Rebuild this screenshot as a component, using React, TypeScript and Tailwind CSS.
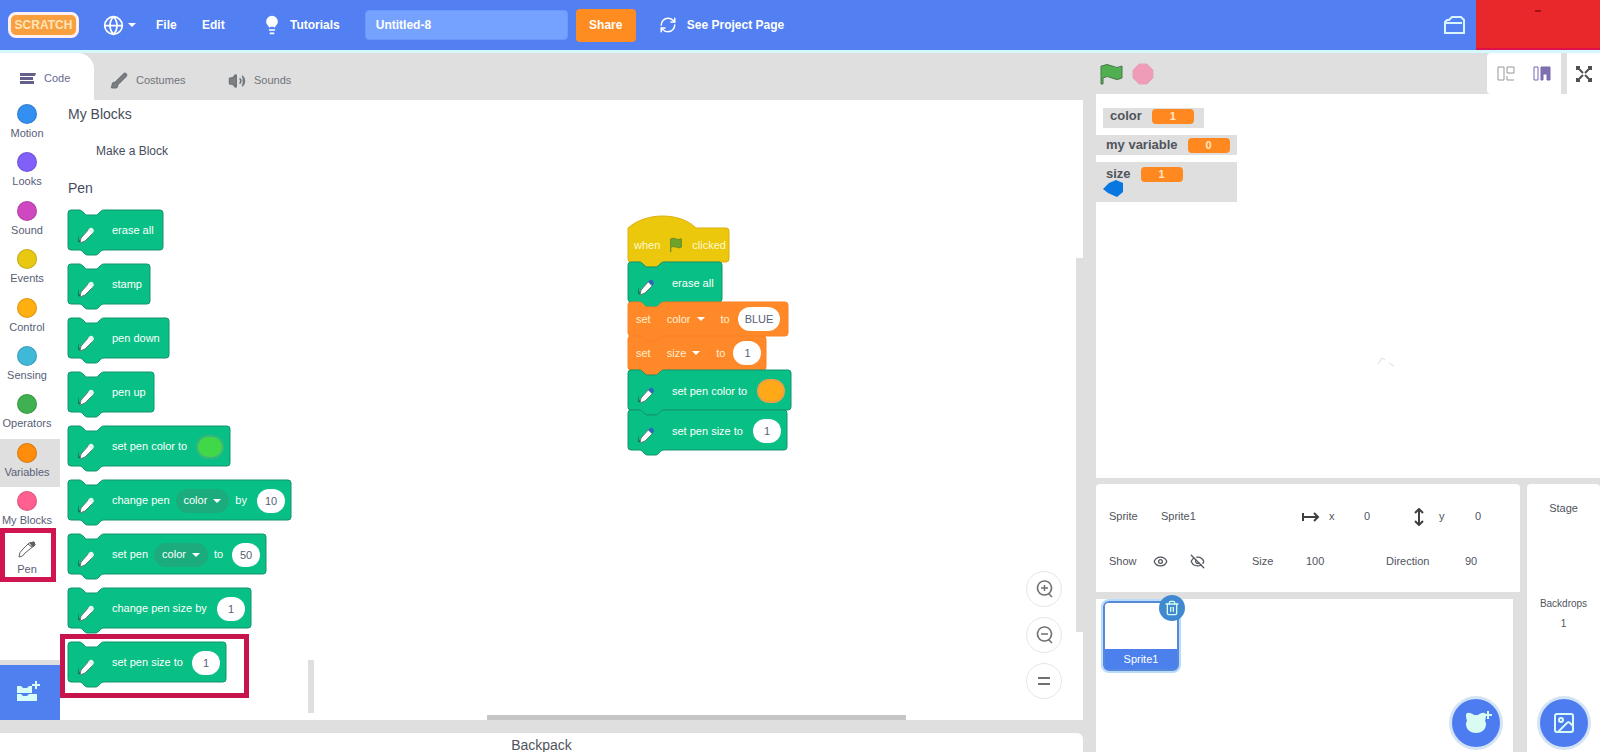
import React from "react";
import {
  Brush,
  Cat,
  Eye,
  EyeOff,
  Flag,
  Globe,
  Image as ImageIcon,
  Lightbulb,
  RefreshCw,
  Trash2,
  Volume2,
} from "lucide-react";

interface Category {
  name: string;
  color: string;
}

interface BlockPart {
  kind: "text" | "menu" | "value" | "color" | "variable";
  text?: string;
  className?: string;
}

interface BlockData {
  id: string;
  width: number;
  parts: BlockPart[];
}

interface Monitor {
  name: string;
  value: string;
  box: string;
}

const categories: Category[] = [
  { name: "Motion", color: "bg-[#3390f0]" },
  { name: "Looks", color: "bg-[#8060f8]" },
  { name: "Sound", color: "bg-[#d048c0]" },
  { name: "Events", color: "bg-[#e8c810]" },
  { name: "Control", color: "bg-[#ffb010]" },
  { name: "Sensing", color: "bg-[#40b8d8]" },
  { name: "Operators", color: "bg-[#40b050]" },
  { name: "Variables", color: "bg-[#ff8c0a]" },
  { name: "My Blocks", color: "bg-[#ff6090]" },
];

const penBlocks: BlockData[] = [
  { id: "erase", width: 95, parts: [{ kind: "text", text: "erase all" }] },
  { id: "stamp", width: 82, parts: [{ kind: "text", text: "stamp" }] },
  { id: "down", width: 101, parts: [{ kind: "text", text: "pen down" }] },
  { id: "up", width: 86, parts: [{ kind: "text", text: "pen up" }] },
  {
    id: "set-color",
    width: 162,
    parts: [
      { kind: "text", text: "set pen color to" },
      { kind: "color", className: "bg-[#40d848] border-[#38b878]" },
    ],
  },
  {
    id: "change-param",
    width: 223,
    parts: [
      { kind: "text", text: "change pen" },
      { kind: "menu", text: "color" },
      { kind: "text", text: "by" },
      { kind: "value", text: "10" },
    ],
  },
  {
    id: "set-param",
    width: 198,
    parts: [
      { kind: "text", text: "set pen" },
      { kind: "menu", text: "color" },
      { kind: "text", text: "to" },
      { kind: "value", text: "50" },
    ],
  },
  {
    id: "change-size",
    width: 183,
    parts: [
      { kind: "text", text: "change pen size by" },
      { kind: "value", text: "1" },
    ],
  },
  {
    id: "set-size",
    width: 158,
    parts: [
      { kind: "text", text: "set pen size to" },
      { kind: "value", text: "1" },
    ],
  },
];

const monitors: Monitor[] = [
  { name: "color", value: "1", box: "ml-[7px] h-5 w-[101px] pl-[7px] pb-1" },
  { name: "my variable", value: "0", box: "mt-[7px] h-5 w-[141px] pl-2.5" },
  { name: "size", value: "1", box: "mt-[7px] h-10 w-[141px] pl-2.5 pb-4" },
];

const notchTop = "H11 c2 0 3 1 4 2 l2 2 c1 1 2 1 3 1 h7 c1 0 2 0 3 -1 l2 -2 c1 -1 2 -2 4 -2";
const notchBottom = "H36 c-2 0 -3 1 -4 2 l-2 2 c-1 1 -2 1 -3 1 h-7 c-1 0 -2 0 -3 -1 l-2 -2 c-1 -1 -2 -2 -4 -2";

interface ShapeProps {
  width: number;
  height: number;
  fill: string;
  stroke: string;
  hat?: boolean;
}

const BlockShape: React.FC<ShapeProps> = ({ width, height, fill, stroke, hat }) => {
  const top = hat ? `M0 12 C18 -4 52 -4 68 12 H${width - 3}` : `M0 3 Q0 0 3 0 ${notchTop} H${width - 3}`;
  const shoulder = hat ? 12 : 0;
  return (
    <svg className="absolute inset-0 overflow-visible" width={width} height={height} aria-hidden="true">
      <path
        d={`${top} q3 0 3 3 V${height - 3} q0 3 -3 3 ${notchBottom} H3 q-3 0 -3 -3 V${shoulder + 3} Z`}
        fill={fill}
        stroke={stroke}
      />
    </svg>
  );
};

const PenIcon = ({ tip }: { tip: string }) => (
  <svg className="h-5 w-4" viewBox="0 0 16 20" aria-hidden="true">
    <path d="M2 18 L3 13 L11 4 L15 8 L7 16 Z" fill="white" stroke="#5f7c74" strokeWidth="1" />
    <path d="M10 5 L12 3 Q15 2 16 6 L14 9 Z" fill={tip} />
    <path d="M0 11 Q-1 15 2 17" fill="none" stroke="#126b52" strokeWidth="1.5" />
  </svg>
);

const Part: React.FC<{ part: BlockPart; label: string }> = ({ part, label }) => {
  if (part.kind === "menu" || part.kind === "variable") {
    return (
      <button
        className={`flex h-6 items-center gap-1.5 rounded-full px-2 ${part.kind === "menu" ? "bg-[#1cab7c]" : ""}`}
      >
        {part.text}
        <svg className="h-1.5 w-2" viewBox="0 0 8 6" aria-hidden="true">
          <path d="M0 1 H8 L4 5 Z" fill="white" />
        </svg>
      </button>
    );
  }
  if (part.kind === "value") {
    return (
      <input
        aria-label={label}
        defaultValue={part.text}
        className={`ml-auto h-6 rounded-full bg-white text-center font-normal text-[#575e75] ${part.className || "w-7"}`}
      />
    );
  }
  if (part.kind === "color") {
    return <button aria-label={label} className={`ml-auto h-6 w-7 rounded-full border-2 ${part.className}`} />;
  }
  return <span>{part.text}</span>;
};

const PenBlock: React.FC<{ block: BlockData; tip?: string }> = ({ block, tip = "#e8f4f0" }) => (
  <div className="relative h-10" style={{ width: block.width }}>
    <BlockShape width={block.width} height={40} fill="#08c085" stroke="#10946c" />
    <div className="relative flex h-full items-center gap-1.5 pt-0.5 pr-1.5 pl-2.5 text-[11px] whitespace-nowrap text-white">
      <span className="mr-3 w-4 shrink-0 pt-2">
        <PenIcon tip={tip} />
      </span>
      {block.parts.map((part, index) => (
        <Part key={index} part={part} label={block.id} />
      ))}
    </div>
  </div>
);

const VariableBlock: React.FC<{ block: BlockData }> = ({ block }) => (
  <div className="relative h-[34px]" style={{ width: block.width }}>
    <BlockShape width={block.width} height={34} fill="#ff8828" stroke="#fa8226" />
    <div className="relative flex h-full items-center gap-2 pr-2 pl-2 text-[11px] whitespace-nowrap text-[#fff0d0]">
      {block.parts.map((part, index) => (
        <Part key={index} part={part} label={block.id} />
      ))}
    </div>
  </div>
);

const Script = () => (
  <div className="absolute top-[116px] left-[314px] flex flex-col">
    <div className="relative h-[46px] w-[101px]">
      <BlockShape width={101} height={46} fill="#ecc80c" stroke="#dcb010" hat />
      <div className="relative flex h-full items-center gap-2 pt-3 pl-1.5 text-[11px] text-[#fff8d0]">
        <span>when</span>
        <Flag className="size-4 fill-[#6fa32a] text-[#6f942a]" />
        <span>clicked</span>
      </div>
    </div>
    <PenBlock tip="#2c68b8" block={{ id: "script erase", width: 94, parts: [{ kind: "text", text: "erase all" }] }} />
    <VariableBlock
      block={{
        id: "color value",
        width: 160,
        parts: [
          { kind: "text", text: "set" },
          { kind: "variable", text: "color" },
          { kind: "text", text: "to" },
          { kind: "value", text: "BLUE", className: "w-[42px]" },
        ],
      }}
    />
    <VariableBlock
      block={{
        id: "size value",
        width: 138,
        parts: [
          { kind: "text", text: "set" },
          { kind: "variable", text: "size" },
          { kind: "text", text: "to" },
          { kind: "value", text: "1" },
        ],
      }}
    />
    <PenBlock
      tip="#2c68b8"
      block={{
        id: "script pen color",
        width: 163,
        parts: [
          { kind: "text", text: "set pen color to" },
          { kind: "color", className: "bg-[#ffa818] border-[#f0a040]" },
        ],
      }}
    />
    <PenBlock
      tip="#2c68b8"
      block={{
        id: "script pen size",
        width: 159,
        parts: [
          { kind: "text", text: "set pen size to" },
          { kind: "value", text: "1" },
        ],
      }}
    />
  </div>
);

const Header = () => (
  <header className="flex h-[53px] shrink-0 items-center border-b-3 border-[#d4f8fc] bg-[#5280f2] text-xs font-bold text-white">
    <a
      href="#home"
      className="ml-2 flex h-[26px] w-[71px] items-center justify-center rounded-lg border-3 border-[#fff0f0] bg-[#f8a040] text-xs text-[#ffe4b8]"
    >
      SCRATCH
    </a>
    <button className="ml-6 flex w-[53px] items-center gap-1" aria-label="Language">
      <Globe className="size-[21px]" />
      <svg className="h-1.5 w-2" viewBox="0 0 8 6" aria-hidden="true">
        <path d="M0 1 H8 L4 5 Z" fill="white" />
      </svg>
    </button>
    <button className="w-[46px] text-left">File</button>
    <button className="w-[60px] text-left">Edit</button>
    <button className="flex items-center gap-2">
      <Lightbulb className="size-5 fill-white" />
      Tutorials
    </button>
    <input
      aria-label="Project title"
      defaultValue="Untitled-8"
      className="ml-[25px] h-[30px] w-[203px] rounded-sm border border-[#6a98fc] bg-[#76a2ff] px-2.5"
    />
    <button className="ml-2 h-[33px] w-[60px] rounded-sm bg-[#ff8c20]">Share</button>
    <button className="ml-[23px] flex items-center gap-2.5">
      <RefreshCw className="size-[18px]" />
      See Project Page
    </button>
    <button className="ml-auto" aria-label="My stuff">
      <svg className="size-[22px]" viewBox="0 0 22 22" fill="none" stroke="#d8f4ff" strokeWidth="2" aria-hidden="true">
        <path d="M1 8 V19 H20 V6 L17 3 H8 L5 6 H3 Z M1 9 H18" />
      </svg>
    </button>
    <div className="ml-2.5 flex h-full w-[124px] justify-center border-b-2 border-[#dc104c] bg-[#e8282a] pt-2.5">
      <span className="h-0.5 w-1.5 bg-[#a81018]" />
    </div>
  </header>
);

const Tabs = () => (
  <div className="flex h-[47px] shrink-0 items-center text-[11px] text-[#70747c]" role="tablist">
    <button
      role="tab"
      aria-selected="true"
      className="flex h-full w-[94px] items-center gap-2 rounded-tr-2xl bg-white pt-1 pl-5 text-[#686a90]"
    >
      <svg className="h-3 w-4" viewBox="0 0 16 12" aria-hidden="true">
        <path d="M0 0 H16 L15 3 H0 Z M0 4 H13 V7 H0 Z M0 8 H14 V11 H0 Z" fill="#64608c" />
      </svg>
      Code
    </button>
    <button role="tab" aria-selected="false" className="flex h-full w-[118px] items-center gap-2 pt-2 pl-4">
      <Brush className="size-[18px] fill-[#808080]" />
      Costumes
    </button>
    <button role="tab" aria-selected="false" className="flex h-full items-center gap-2 pt-2 pl-4">
      <Volume2 className="size-[18px] fill-[#808080]" />
      Sounds
    </button>
  </div>
);

const CategoryMenu = () => (
  <div className="flex w-[60px] shrink-0 flex-col bg-white">
    <nav className="flex h-[484px] flex-col text-[11px] leading-3 text-[#575e75]">
      {categories.map((category) => (
        <button
          key={category.name}
          className={`flex flex-1 flex-col items-center gap-[3px] pt-1 pr-1.5 whitespace-nowrap ${
            category.name === "Variables" ? "bg-[#dfdfdf]" : ""
          }`}
        >
          <span className={`size-5 rounded-full border border-black/15 ${category.color}`} />
          {category.name}
        </button>
      ))}
      <button className="relative flex flex-1 flex-col items-center gap-[3px] pt-1 pr-1.5">
        <span className="absolute -top-2 right-1 bottom-0.5 left-0 border-5 border-[#d01450]" />
        <svg className="size-5" viewBox="0 0 20 20" fill="none" stroke="#606060" aria-hidden="true">
          <path d="M2 17 Q2 12 6 9 L12 3 L17 2 L18 5 L8 13 Q6 17 2 17 Z M11 4 L15 7" />
          <path d="M13 3 L17 2 L18 5 L16 7 Z" fill="#606060" />
        </svg>
        Pen
      </button>
    </nav>
    <button
      aria-label="Add extension"
      className="mt-auto flex h-[60px] items-center justify-center border-t-5 border-[#dfdfdf] bg-[#5080f0] pr-1"
    >
      <svg className="h-7 w-7" viewBox="0 0 28 28" aria-hidden="true">
        <path d="M3 7 h4 l2 2 h4 l2 -2 h3 v7 H3 Z M3 15 h4 l2 2 h4 l2 -2 h8 v7 H3 Z" fill="#d8fcf8" />
        <path d="M22 2 V10 M18 6 H26" stroke="#d8fcf8" strokeWidth="2" />
      </svg>
    </button>
  </div>
);

const Palette = () => (
  <div className="relative w-[254px] shrink-0 bg-white pl-2 text-sm text-[#454c5c]">
    <h2 className="flex h-7 items-center">My Blocks</h2>
    <button className="flex h-[46px] items-center pl-7 text-xs">Make a Block</button>
    <h2 className="flex h-7 items-center">Pen</h2>
    <div className="flex flex-col gap-3.5 pt-2">
      {penBlocks.map((block) => (
        <div key={block.id} className="relative">
          <PenBlock block={block} />
          {block.id === "set-size" && (
            <span className="pointer-events-none absolute -top-2 -left-2 h-16 w-[189px] border-5 border-[#c8144c]" />
          )}
        </div>
      ))}
    </div>
    <span className="absolute right-0 bottom-[7px] h-[53px] w-1.5 bg-[#dfdfdf]" />
  </div>
);

const zoomButton = "flex size-9 items-center justify-center rounded-full border border-[#e6e6e6] text-[#707070]";

const Workspace = () => (
  <main className="relative min-w-0 flex-1 overflow-hidden bg-white">
    <Script />
    <div className="absolute right-[21px] bottom-[21px] flex flex-col gap-2.5">
      <button className={zoomButton} aria-label="Zoom in">
        <svg className="size-5" viewBox="0 0 20 20" fill="none" stroke="currentColor" strokeWidth="1.5">
          <path d="M10 2 a7 7 0 1 0 1 0 Z M15 15 L18 18 M7 9 H14 M10.500 6 V12" />
        </svg>
      </button>
      <button className={zoomButton} aria-label="Zoom out">
        <svg className="size-5" viewBox="0 0 20 20" fill="none" stroke="currentColor" strokeWidth="1.5">
          <path d="M10 2 a7 7 0 1 0 1 0 Z M15 15 L18 18 M7 9 H14" />
        </svg>
      </button>
      <button className={zoomButton} aria-label="Reset zoom">
        <svg className="size-4" viewBox="0 0 16 16" stroke="currentColor" strokeWidth="2">
          <path d="M2 5 H14 M2 11 H14" />
        </svg>
      </button>
    </div>
    <span className="absolute right-[23%] bottom-0 left-[22%] ml-1 h-[5px] bg-[#c6c6c6]" />
    <span className="absolute top-[158px] right-0 bottom-[88px] w-[7px] bg-[#dfdfdf]" />
  </main>
);

const StageHeader = () => (
  <div className="flex h-[41px] shrink-0 items-center">
    <button aria-label="Go" className="ml-1">
      <svg className="h-6 w-6" viewBox="0 0 24 24" aria-hidden="true">
        <path d="M2 4 Q7 1 12 4 T22 4 V16 Q17 19 12 16 T3 16 V22 H1 V4 Z" fill="#50b050" stroke="#48784c" />
      </svg>
    </button>
    <button aria-label="Stop" className="ml-2">
      <svg className="size-[22px]" viewBox="0 0 22 22" aria-hidden="true">
        <path d="M7 1 H15 L21 7 V15 L15 21 H7 L1 15 V7 Z" fill="#f09cb8" stroke="#e0a8b8" />
      </svg>
    </button>
    <div className="mr-1.5 ml-auto flex h-full w-[74px] items-center justify-center gap-[18px] rounded-l-sm bg-white">
      <button aria-label="Small stage">
        <svg className="h-4 w-[18px]" viewBox="0 0 18 16" fill="none" stroke="#989898" aria-hidden="true">
          <path d="M1 1 V14 H7 V1 Z M10 1 H17 V7 H10 Z M10 10 V14 H17" />
        </svg>
      </button>
      <button aria-label="Large stage">
        <svg className="h-4 w-[18px]" viewBox="0 0 18 16" fill="none" stroke="#7868b0" aria-hidden="true">
          <path d="M1 1 V14 H5 V1 Z" />
          <path d="M8 1 H17 V14 H14 V8 H10 V14 H8 Z" fill="#8070b0" />
        </svg>
      </button>
    </div>
    <button aria-label="Full screen" className="flex h-full w-[33px] items-center justify-center bg-white">
      <svg className="size-[18px]" viewBox="0 0 18 18" stroke="#505050" strokeWidth="2" fill="none" aria-hidden="true">
        <path d="M2 5 V2 H5 M13 2 H16 V5 M16 13 V16 H13 M5 16 H2 V13 M2 2 L8 8 M16 2 L10 8 M16 16 L10 10 M2 16 L8 10" />
      </svg>
    </button>
  </div>
);

const Stage = () => (
  <section className="relative flex-1 bg-white pt-3.5">
    {monitors.map((monitor) => (
      <div
        key={monitor.name}
        className={`flex items-center gap-2.5 bg-[#dfdfdf] text-[13px] leading-4 font-bold text-[#50545c] ${monitor.box}`}
      >
        {monitor.name}
        <span className="flex h-[15px] w-[42px] items-center justify-center rounded-sm bg-[#ff8820] text-[11px] text-[#ffe8c0]">
          {monitor.value}
        </span>
      </div>
    ))}
    <svg className="absolute top-[86px] left-[7px] h-[18px] w-[22px]" viewBox="0 0 22 18" aria-hidden="true">
      <path d="M0 9 L6 3 L13 0 L20 3 V12 L14 17 L5 13 Z" fill="#0878e0" />
    </svg>
    <svg className="absolute top-[262px] left-[280px] h-3 w-5" viewBox="0 0 20 12" stroke="#dcdcdc" fill="none" aria-hidden="true">
      <path d="M2 8 L6 2 L9 4 M13 7 L18 10" />
    </svg>
  </section>
);

const SpriteInfo = () => (
  <section className="flex h-[108px] shrink-0 flex-col justify-center gap-[21px] rounded-t-sm bg-white pt-0.5 pl-[13px] text-[11px] text-[#50545c]">
    <div className="grid h-6 grid-cols-[52px_141px_27px_35px_49px_26px_36px_1fr] items-center">
      <label htmlFor="sprite-name">Sprite</label>
      <input id="sprite-name" defaultValue="Sprite1" className="w-24" />
      <svg className="h-4 w-[18px]" viewBox="0 0 18 16" stroke="#404040" strokeWidth="2" fill="none" aria-hidden="true">
        <path d="M1 4 V12 M1 8 H16 M12 4 L16 8 L12 12" />
      </svg>
      <label htmlFor="sprite-x">x</label>
      <input id="sprite-x" defaultValue="0" className="w-7" />
      <svg className="h-[18px] w-3" viewBox="0 0 12 18" stroke="#404040" strokeWidth="2" fill="none" aria-hidden="true">
        <path d="M6 2 V16 M2 5 L6 1 L10 5 M2 13 L6 17 L10 13" />
      </svg>
      <label htmlFor="sprite-y">y</label>
      <input id="sprite-y" defaultValue="0" className="w-7" />
    </div>
    <div className="grid h-6 grid-cols-[44px_37px_62px_54px_80px_79px_1fr] items-center">
      <span>Show</span>
      <button aria-label="Show sprite">
        <Eye className="size-[15px]" />
      </button>
      <button aria-label="Hide sprite">
        <EyeOff className="size-[15px]" />
      </button>
      <label htmlFor="sprite-size">Size</label>
      <input id="sprite-size" defaultValue="100" className="w-9" />
      <label htmlFor="sprite-direction">Direction</label>
      <input id="sprite-direction" defaultValue="90" className="w-9" />
    </div>
  </section>
);

const fab = "flex size-12 items-center justify-center rounded-full bg-[#4c7cf0] text-white ring-3 ring-[#d4e4f4]";

const SpriteList = () => (
  <section className="relative mr-[7px] h-[153px] shrink-0 bg-white pt-0.5 pl-[7px]">
    <div className="relative flex h-[70px] w-[76px] flex-col rounded-md border-2 border-[#5888d8] ring-2 ring-[#b8dcfc]">
      <div className="flex-1 rounded-t-sm bg-white" />
      <div className="flex h-5 items-center justify-center bg-[#4c80ec] text-[11px] text-white">Sprite1</div>
      <button
        aria-label="Delete sprite"
        className="absolute -top-2 -right-2 flex size-[26px] items-center justify-center rounded-full bg-[#4088d0] text-[#d4fcf0]"
      >
        <Trash2 className="size-4" />
      </button>
    </div>
    <button aria-label="Choose a sprite" className={`absolute right-[13px] bottom-[5px] ${fab}`}>
      <Cat className="size-6 fill-[#d8fcf4] text-[#d8fcf4]" />
      <svg className="absolute top-3 right-2 size-2" viewBox="0 0 8 8" stroke="#d8fcf4" strokeWidth="2" aria-hidden="true">
        <path d="M4 0 V8 M0 4 H8" />
      </svg>
    </button>
  </section>
);

const StagePane = () => (
  <aside className="flex w-[73px] shrink-0 flex-col items-center rounded-t-sm bg-white pt-4 pb-[5px] text-[11px] text-[#50545c]">
    <span className="leading-4">Stage</span>
    <span className="mt-20 text-[10px] leading-4">Backdrops</span>
    <span className="mt-1 text-[10px] leading-4">1</span>
    <button aria-label="Choose a backdrop" className={`mt-auto ${fab}`}>
      <ImageIcon className="size-6 text-[#d8fcf4]" />
    </button>
  </aside>
);

export default function App() {
  return (
    <div className="flex h-screen min-h-[600px] flex-col overflow-hidden bg-[#dfdfdf] font-['Liberation_Sans',Arial,sans-serif]">
      <Header />
      <div className="flex min-h-0 flex-1">
        <div className="flex min-w-0 flex-1 flex-col">
          <Tabs />
          <div className="flex min-h-0 flex-1">
            <CategoryMenu />
            <Palette />
            <Workspace />
          </div>
          <button className="mt-[13px] flex h-[19px] shrink-0 items-center justify-center rounded-tr-md bg-white pt-1 text-sm leading-4 text-[#50545c]">
            Backpack
          </button>
        </div>
        <div className="ml-[13px] flex w-[504px] shrink-0 flex-col">
          <StageHeader />
          <Stage />
          <div className="mt-1.5 flex h-[268px] shrink-0">
            <div className="mr-[7px] flex min-w-0 flex-1 flex-col gap-[7px]">
              <SpriteInfo />
              <SpriteList />
            </div>
            <StagePane />
          </div>
        </div>
      </div>
    </div>
  );
}
